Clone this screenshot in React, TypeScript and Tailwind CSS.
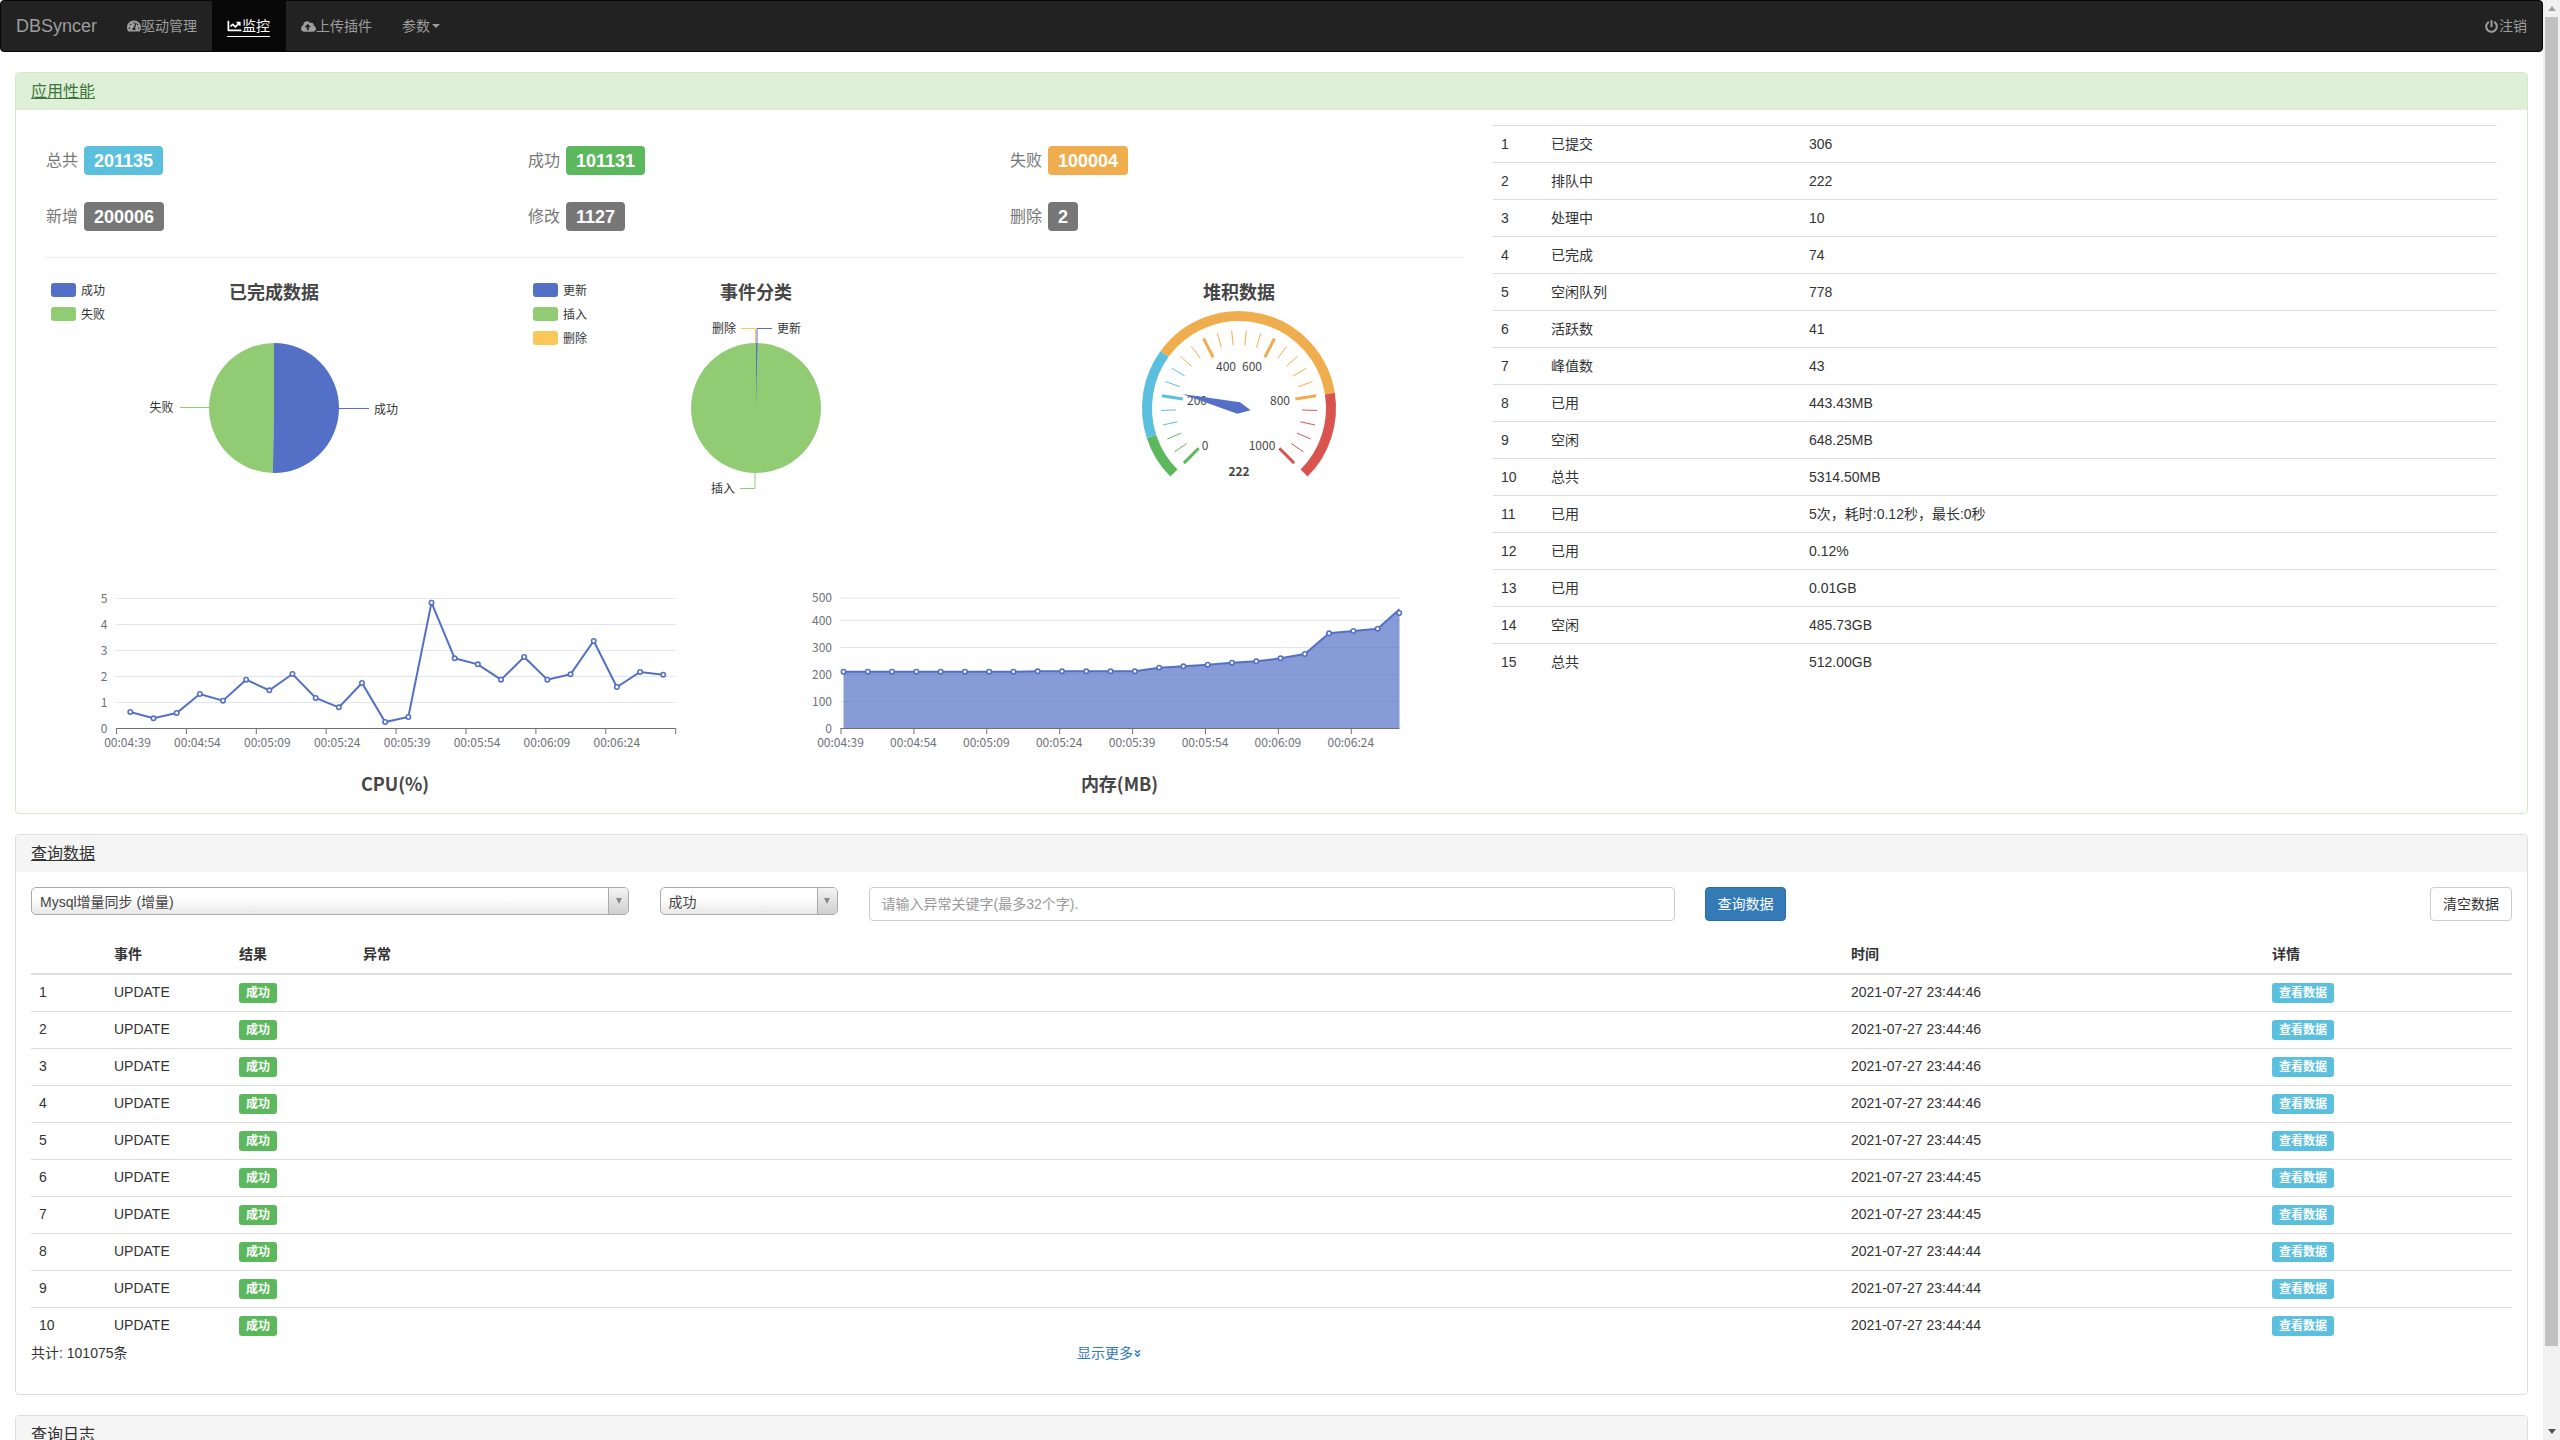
import React from 'react';
import { FaTachometerAlt, FaChartLine, FaCloudUploadAlt, FaPowerOff, FaAngleDoubleDown } from 'react-icons/fa';

const polar = (cx: number, cy: number, r: number, deg: number) => {
  const a = (deg * Math.PI) / 180;
  return [cx + r * Math.cos(a), cy - r * Math.sin(a)];
};
// clockwise-from-top wedge, degrees
const wedge = (cx: number, cy: number, r: number, from: number, to: number) => {
  const [x1, y1] = polar(cx, cy, r, 90 - from);
  const [x2, y2] = polar(cx, cy, r, 90 - to);
  const large = to - from > 180 ? 1 : 0;
  return `M${cx} ${cy}L${x1} ${y1}A${r} ${r} 0 ${large} 1 ${x2} ${y2}Z`;
};

const BLUE = '#5470c6';
const GREEN = '#91cc75';
const YELLOW = '#fac858';

function Legend({ x, items }: { x: number; items: [string, string][] }) {
  return (
    <g>
      {items.map(([label, color], i) => (
        <g key={label}>
          <rect x={x} y={283 + i * 24} width={25} height={14} rx={3} fill={color} />
          <text x={x + 30} y={289.5 + i * 24} fontSize={12} fill="#333" dominantBaseline="central">{label}</text>
        </g>
      ))}
    </g>
  );
}

function Title({ x, y, children }: { x: number; y: number; children: React.ReactNode }) {
  return (
    <text x={x} y={y} fontSize={18} fontWeight={700} fill="#464646" textAnchor="middle" dominantBaseline="central">{children}</text>
  );
}

function PieDone() {
  const c = [274, 408] as const;
  return (
    <svg viewBox="31 258 482 322" className="w-[482px] h-[322px] shrink-0 [font-family:'Noto_Sans_CJK_SC',sans-serif]">
      <Legend x={51} items={[['成功', BLUE], ['失败', GREEN]]} />
      <Title x={274} y={291}>已完成数据</Title>
      <path d={wedge(c[0], c[1], 65, 181, 360)} fill={GREEN} />
      <path d={wedge(c[0], c[1], 65, 0, 181)} fill={BLUE} />
      <path d="M180 407.5H209" stroke={GREEN} fill="none" />
      <path d="M339 408.5H369" stroke={BLUE} fill="none" />
      <text x={149.5} y={406.5} fontSize={12} fill="#333" dominantBaseline="central">失败</text>
      <text x={374} y={408.5} fontSize={12} fill="#333" dominantBaseline="central">成功</text>
    </svg>
  );
}

function PieEvents() {
  return (
    <svg viewBox="513 258 482 322" className="w-[482px] h-[322px] shrink-0 [font-family:'Noto_Sans_CJK_SC',sans-serif]">
      <Legend x={533} items={[['更新', BLUE], ['插入', GREEN], ['删除', YELLOW]]} />
      <Title x={756} y={291}>事件分类</Title>
      <circle cx={756} cy={408} r={65} fill={GREEN} />
      <path d={wedge(756, 408, 65, 0, 1.3)} fill={BLUE} />
      <path d="M741 328.5H755.5V343" stroke={YELLOW} fill="none" />
      <path d="M772 328.5H757V343" stroke={BLUE} fill="none" />
      <path d="M740 488.5H755V473" stroke={GREEN} fill="none" />
      <text x={712} y={327.5} fontSize={12} fill="#333" dominantBaseline="central">删除</text>
      <text x={777} y={327.5} fontSize={12} fill="#333" dominantBaseline="central">更新</text>
      <text x={711} y={487} fontSize={12} fill="#333" dominantBaseline="central">插入</text>
    </svg>
  );
}

function Gauge() {
  const cx = 1239;
  const cy = 408;
  const colorAt = (v: number) => (v <= 0.1001 ? '#5cb85c' : v <= 0.3001 ? '#5bc0de' : v <= 0.8001 ? '#f0ad4e' : '#d9534f');
  const ang = (v: number) => 225 - v * 270;
  const arc = (a: number, b: number) => {
    const [x1, y1] = polar(cx, cy, 92, ang(a));
    const [x2, y2] = polar(cx, cy, 92, ang(b));
    return `M${x1} ${y1}A92 92 0 ${ang(a) - ang(b) > 180 ? 1 : 0} 1 ${x2} ${y2}`;
  };
  const segs: [number, number][] = [[0, 0.1], [0.1, 0.3], [0.3, 0.8], [0.8, 1]];
  const ticks = Array.from({ length: 51 }, (_, i) => i);
  const p = [
    [1182, 394],
    [1240, 402.3],
    [1250.7, 410.3],
    [1237.3, 413.7],
  ];
  const labels: [string, number, number][] = [
    ['0', 1205, 444.5],
    ['200', 1197, 399.5],
    ['400', 1226, 365.5],
    ['600', 1252, 365.5],
    ['800', 1280, 399.5],
    ['1000', 1262, 444.5],
  ];
  return (
    <svg viewBox="995 258 482 322" className="w-[482px] h-[322px] shrink-0 [font-family:'Noto_Sans_CJK_SC',sans-serif]">
      <Title x={1239} y={291}>堆积数据</Title>
      {segs.map(([a, b]) => (
        <path key={a} d={arc(a, b)} stroke={colorAt(b)} strokeWidth={10} fill="none" />
      ))}
      {ticks.filter((i) => i % 2 === 0).map((i) => {
        const v = i / 50;
        const major = i % 10 === 0;
        const [x1, y1] = polar(cx, cy, 78, ang(v));
        const [x2, y2] = polar(cx, cy, major ? 57 : 63, ang(v));
        return <line key={i} x1={x1} y1={y1} x2={x2} y2={y2} stroke={colorAt(v)} strokeWidth={major ? 3 : 1} />;
      })}
      {labels.map(([t, x, y]) => (
        <text key={t} x={x} y={y} fontSize={12} fill="#464646" textAnchor="middle" dominantBaseline="central">{t}</text>
      ))}
      <polygon points={p.map((q) => q.join(',')).join(' ')} fill={BLUE} />
      <text x={1239} y={470} fontSize={12} fontWeight={700} fill="#464646" textAnchor="middle" dominantBaseline="central">222</text>
    </svg>
  );
}

const AXIS = '#6e7079';
const GRID = '#e0e6f1';

function CpuChart() {
  const ys = [426, 445, 429, 372, 392, 329, 361, 312, 384, 412, 339, 456, 441, 98, 265, 283, 329, 261, 329, 313, 213, 351, 306, 314];
  const pts = ys.map((d, i) => [130.3 + i * 23.17, 570 + d / 3]);
  const times = ['00:04:39', '00:04:54', '00:05:09', '00:05:24', '00:05:39', '00:05:54', '00:06:09', '00:06:24'];
  return (
    <svg viewBox="31 580 723.5 218" className="w-[723.5px] h-[218px] shrink-0 [font-family:'Noto_Sans_CJK_SC',sans-serif]">
      {[1, 2, 3, 4, 5].map((v) => (
        <line key={v} x1={116} x2={675.5} y1={728.5 - v * 26} y2={728.5 - v * 26} stroke={GRID} />
      ))}
      {[0, 1, 2, 3, 4, 5].map((v) => (
        <text key={v} x={107.5} y={727 - v * 26} fontSize={12} fill={AXIS} textAnchor="end" dominantBaseline="central">{v}</text>
      ))}
      <line x1={116} x2={675.5} y1={728.5} y2={728.5} stroke={AXIS} />
      {Array.from({ length: 9 }, (_, i) => (
        <line key={i} x1={116.5 + i * 69.9} x2={116.5 + i * 69.9} y1={728} y2={734} stroke={AXIS} />
      ))}
      {times.map((t, i) => (
        <text key={t} x={127.5 + i * 69.9} y={741.5} fontSize={12} fill={AXIS} textAnchor="middle" dominantBaseline="central">{t}</text>
      ))}
      <polyline points={pts.map((q) => q.join(',')).join(' ')} fill="none" stroke={BLUE} strokeWidth={2} />
      {pts.map(([x, y], i) => (
        <circle key={i} cx={x} cy={y} r={2.2} fill="#fff" stroke={BLUE} strokeWidth={1.6} />
      ))}
      <Title x={395} y={783}>CPU(%)</Title>
    </svg>
  );
}

function MemChart() {
  const ys = [305, 305, 305, 305, 305, 305, 305, 305, 304, 304, 304, 304, 304, 293, 289, 284, 278, 274, 265, 252, 190, 183, 176];
  const pts = ys.map((d, i) => [843 + i * 24.28, 570 + d / 3]);
  const all = [...pts, [1399, 570 + 118 / 3]];
  const times = ['00:04:39', '00:04:54', '00:05:09', '00:05:24', '00:05:39', '00:05:54', '00:06:09', '00:06:24'];
  const yl: [string, number][] = [['500', 598], ['400', 620.5], ['300', 647.5], ['200', 674.5], ['100', 701.5], ['0', 728.5]];
  return (
    <svg viewBox="754.5 580 723.5 218" className="w-[723.5px] h-[218px] shrink-0 [font-family:'Noto_Sans_CJK_SC',sans-serif]">
      {yl.slice(0, 5).map(([t, y]) => (
        <line key={t} x1={840} x2={1399} y1={y} y2={y} stroke={GRID} />
      ))}
      {yl.map(([t, y]) => (
        <text key={t} x={831.5} y={y - 1.5} fontSize={12} fill={AXIS} textAnchor="end" dominantBaseline="central">{t}</text>
      ))}
      <polygon points={`843,728 ${all.map((q) => q.join(',')).join(' ')} 1399,728`} fill={BLUE} fillOpacity={0.7} />
      <line x1={840} x2={1399} y1={728.5} y2={728.5} stroke={AXIS} />
      {times.map((t, i) => (
        <g key={t}>
          <line x1={840.5 + i * 72.9} x2={840.5 + i * 72.9} y1={728} y2={734} stroke={AXIS} />
          <text x={840 + i * 72.9} y={741.5} fontSize={12} fill={AXIS} textAnchor="middle" dominantBaseline="central">{t}</text>
        </g>
      ))}
      <polyline points={all.map((q) => q.join(',')).join(' ')} fill="none" stroke={BLUE} strokeWidth={2} />
      {[...pts, [1398.7, 613]].map(([x, y], i) => (
        <circle key={i} cx={x} cy={y} r={2.2} fill="#fff" stroke={BLUE} strokeWidth={1.6} />
      ))}
      <Title x={1119} y={783}>内存(MB)</Title>
    </svg>
  );
}

function Stat({ label, value, color }: { label: string; value: string; color: string }) {
  return (
    <div className="flex items-center gap-[6px] h-[29px]">
      <span className="text-[16px] text-[#777]">{label}</span>
      <span className={`inline-flex items-center h-[29px] px-[10px] rounded-[4px] text-white font-bold text-[18px] leading-none ${color}`}>{value}</span>
    </div>
  );
}

function Dropdown({ text, className }: { text: string; className: string }) {
  return (
    <div className={`flex h-[28px] border border-[#aaa] rounded-[5px] bg-gradient-to-b from-white from-40% to-[#e8e8e8] text-[#444] ${className}`}>
      <div className="flex-1 pl-[8px] pt-[2px] leading-[24px] text-[14px] whitespace-nowrap">{text}</div>
      <div className="w-[20px] rounded-r-[4px] border-l border-[#aaa] bg-gradient-to-b from-[#f4f4f4] to-[#cfcfcf] flex items-center justify-center">
        <span className="w-0 h-0 border-x-[3.5px] border-x-transparent border-t-[6px] border-t-[#888]" />
      </div>
    </div>
  );
}

const perf: [string, string][] = [
  ['已提交', '306'],
  ['排队中', '222'],
  ['处理中', '10'],
  ['已完成', '74'],
  ['空闲队列', '778'],
  ['活跃数', '41'],
  ['峰值数', '43'],
  ['已用', '443.43MB'],
  ['空闲', '648.25MB'],
  ['总共', '5314.50MB'],
  ['已用', '5次，耗时:0.12秒，最长:0秒'],
  ['已用', '0.12%'],
  ['已用', '0.01GB'],
  ['空闲', '485.73GB'],
  ['总共', '512.00GB'],
];

const times = ['46', '46', '46', '46', '45', '45', '45', '44', '44', '44'];

export default function App() {
  return (
    <div className="flex h-[1440px] overflow-hidden bg-white text-[14px] leading-[20px] text-[#333] [font-family:'Liberation_Sans','Noto_Sans_CJK_SC',sans-serif]">
      <div className="w-[2543px] shrink-0">
        <nav className="flex items-stretch justify-between h-[52px] bg-[#222] border border-[#080808] rounded-[4px] text-[#9d9d9d] mb-[20px]">
          <div className="flex items-stretch">
            <a className="flex items-center pl-[15px] pr-[14px] text-[18px] w-[111px]">DBSyncer</a>
            <a className="flex items-center px-[15px] whitespace-nowrap"><FaTachometerAlt className="w-[14px] h-[14px]" />驱动管理</a>
            <a className="flex items-center pl-[15px] whitespace-nowrap bg-[#080808] text-white w-[74px]">
              <span className="flex items-center h-[21px] border-b border-white"><FaChartLine className="w-[15px] h-[14px]" />监控</span>
            </a>
            <a className="flex items-center px-[15px] whitespace-nowrap"><FaCloudUploadAlt className="w-[15px] h-[15px]" />上传插件</a>
            <a className="flex items-center px-[15px] whitespace-nowrap">参数
              <span className="ml-[2px] w-0 h-0 border-x-[4px] border-x-transparent border-t-[4px] border-t-[#9d9d9d]" />
            </a>
          </div>
          <a className="flex items-center px-[15px] whitespace-nowrap"><FaPowerOff className="w-[13px] h-[13px] mr-[1px]" />注销</a>
        </nav>

        <div className="mx-[15px]">
          <section className="border border-[#d6e9c6] rounded-[4px] mb-[20px]">
            <div className="flex items-center h-[37px] pl-[15px] rounded-t-[3px] bg-[#dff0d8] text-[#3c763d] text-[16px]">
              <span className="underline">应用性能</span>
            </div>
            <div className="flex pt-[15px] pb-[15px] px-[15px]">
              <div className="w-[1447px] shrink-0">
                <div className="mx-[15px] pt-[21px]">
                  <div className="grid grid-cols-[482px_482px_1fr] gap-y-[27px]">
                    <Stat label="总共" value="201135" color="bg-[#5bc0de]" />
                    <Stat label="成功" value="101131" color="bg-[#5cb85c]" />
                    <Stat label="失败" value="100004" color="bg-[#f0ad4e]" />
                    <Stat label="新增" value="200006" color="bg-[#777]" />
                    <Stat label="修改" value="1127" color="bg-[#777]" />
                    <Stat label="删除" value="2" color="bg-[#777]" />
                  </div>
                  <div className="mt-[26px] h-px bg-[#eee]" />
                </div>
                <div className="flex">
                  <PieDone />
                  <PieEvents />
                  <Gauge />
                </div>
                <div className="flex">
                  <CpuChart />
                  <MemChart />
                </div>
              </div>
              <div className="flex-1 min-w-0 px-[15px]">
                <table className="w-full table-fixed border-collapse">
                  <colgroup>
                    <col className="w-[50px]" />
                    <col className="w-[258px]" />
                    <col />
                  </colgroup>
                  <tbody>
                    {perf.map(([k, v], i) => (
                      <tr key={i} className="h-[37px]">
                        <td className="px-[8px] border-t border-[#ddd]">{i + 1}</td>
                        <td className="px-[8px] border-t border-[#ddd]">{k}</td>
                        <td className="px-[8px] border-t border-[#ddd]">{v}</td>
                      </tr>
                    ))}
                  </tbody>
                </table>
              </div>
            </div>
          </section>

          <section className="border border-[#ddd] rounded-[4px] mb-[20px]">
            <div className="flex items-center h-[37px] pl-[15px] rounded-t-[3px] bg-[#f5f5f5] text-[16px]">
              <span className="underline">查询数据</span>
            </div>
            <div className="px-[15px] pt-[15px] pb-[30px]">
              <div className="flex items-start h-[34px] mb-[15px]">
                <Dropdown text="Mysql增量同步 (增量)" className="w-[598px] mr-[30.5px]" />
                <Dropdown text="成功" className="w-[178px] mr-[31px]" />
                <input
                  placeholder="请输入异常关键字(最多32个字)."
                  className="w-[806.5px] h-[34px] px-[12px] border border-[#ccc] rounded-[4px] placeholder:text-[#999] mr-[30px]"
                />
                <button className="w-[81px] h-[34px] rounded-[4px] bg-[#337ab7] border border-[#2e6da4] text-white">查询数据</button>
                <button className="ml-auto w-[82px] h-[34px] rounded-[4px] bg-white border border-[#ccc] text-[#333]">清空数据</button>
              </div>
              <table className="w-full table-fixed border-collapse">
                <colgroup>
                  <col className="w-[75px]" />
                  <col className="w-[125px]" />
                  <col className="w-[124px]" />
                  <col className="w-[1488px]" />
                  <col className="w-[421px]" />
                  <col />
                </colgroup>
                <thead>
                  <tr className="h-[38px] text-left">
                    {['', '事件', '结果', '异常', '时间', '详情'].map((h, i) => (
                      <th key={i} className="px-[8px] pb-[2px] font-bold border-b-2 border-[#ddd]">{h}</th>
                    ))}
                  </tr>
                </thead>
                <tbody>
                  {times.map((t, i) => (
                    <tr key={i} className="h-[37px]">
                      <td className={`px-[8px] pb-[2px] ${i ? 'border-t border-[#ddd]' : ''}`}>{i + 1}</td>
                      <td className={`px-[8px] pb-[2px] ${i ? 'border-t border-[#ddd]' : ''}`}>UPDATE</td>
                      <td className={`px-[8px] ${i ? 'border-t border-[#ddd]' : ''}`}>
                        <span className="inline-flex items-center justify-center align-middle w-[38px] h-[20px] rounded-[3px] bg-[#5cb85c] text-white font-bold text-[12px] leading-none">成功</span>
                      </td>
                      <td className={`px-[8px] ${i ? 'border-t border-[#ddd]' : ''}`} />
                      <td className={`px-[8px] pb-[2px] ${i ? 'border-t border-[#ddd]' : ''}`}>2021-07-27 23:44:{t}</td>
                      <td className={`px-[8px] ${i ? 'border-t border-[#ddd]' : ''}`}>
                        <span className="inline-flex items-center justify-center align-middle w-[62px] h-[20px] rounded-[3px] bg-[#5bc0de] text-white font-bold text-[12px] leading-none">查看数据</span>
                      </td>
                    </tr>
                  ))}
                </tbody>
              </table>
              <div className="flex -mt-[1px] mb-[1px]">
                <div className="w-[1046px] shrink-0">共计: 101075条</div>
                <a className="flex items-center text-[#337ab7]">显示更多<FaAngleDoubleDown className="w-[9px] h-[9px]" /></a>
              </div>
            </div>
          </section>

          <section className="border border-[#ddd] rounded-[4px]">
            <div className="flex items-center h-[37px] pl-[15px] rounded-t-[3px] bg-[#f5f5f5] text-[16px]">查询日志</div>
          </section>
        </div>
      </div>

      <div className="w-[17px] shrink-0 bg-[#f1f1f1] flex flex-col items-center">
        <div className="h-[17px] flex items-center justify-center">
          <span className="w-0 h-0 border-x-[4px] border-x-transparent border-b-[5px] border-b-[#a3a3a3]" />
        </div>
        <div className="w-[13px] h-[1329px] bg-[#c1c1c1]" />
        <div className="flex-1" />
        <div className="h-[17px] flex items-center justify-center">
          <span className="w-0 h-0 border-x-[4px] border-x-transparent border-t-[5px] border-t-[#505050]" />
        </div>
      </div>
    </div>
  );
}
